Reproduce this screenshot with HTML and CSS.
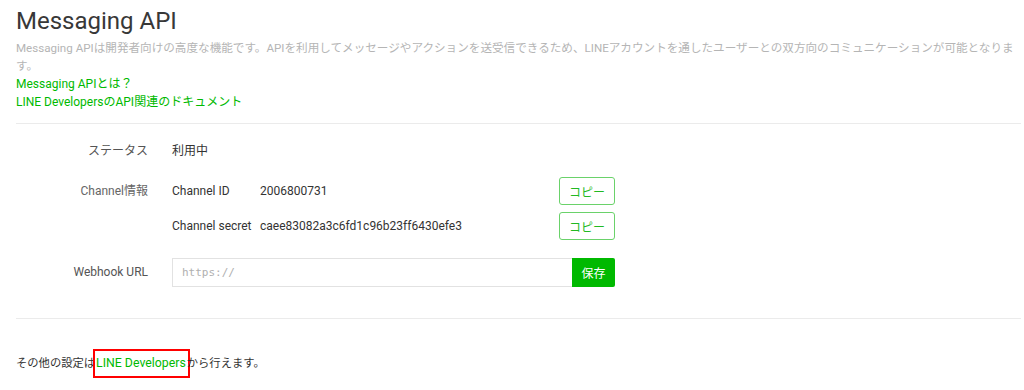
FILE: index.html
```html
<!DOCTYPE html>
<html lang="ja">
  <head>
    <meta charset="UTF-8" />
    <meta name="viewport" content="width=device-width, initial-scale=1.0" />
    <title>Messaging API</title>
    <link rel="stylesheet" href="styles.css">
  </head>
  <body>
    <div class="page">
      <h1 class="title">Messaging API</h1>
      <p class="desc">Messaging APIは開発者向けの高度な機能です。APIを利用してメッセージやアクションを送受信できるため、LINEアカウントを通したユーザーとの双方向のコミュニケーションが可能となります。</p>
      <div class="links">
        <a href="#">Messaging APIとは？</a>
        <a href="#">LINE DevelopersのAPI関連のドキュメント</a>
      </div>
      <hr />

      <div class="form">
        <div class="row status">
          <div class="label">ステータス</div>
          <div class="value">利用中</div>
        </div>

        <div class="row">
          <div class="label channel-label">Channel情報</div>
          <div class="value">
            <div class="info">
              <div class="info-key">Channel ID</div>
              <div class="info-val">2006800731</div>
              <button class="copy">コピー</button>
            </div>
            <div class="info">
              <div class="info-key">Channel secret</div>
              <div class="info-val">caee83082a3c6fd1c96b23ff6430efe3</div>
              <button class="copy">コピー</button>
            </div>
          </div>
        </div>

        <div class="row webhook">
          <div class="label">Webhook URL</div>
          <div class="value">
            <div class="url-box">
              <input type="text" placeholder="https://" />
              <button class="save">保存</button>
            </div>
          </div>
        </div>
      </div>
      <hr class="bottom-line" />

      <p class="note">その他の設定は<a href="#" class="mark">LINE Developers</a>から行えます。</p>
    </div>
  </body>
</html>
```

FILE: styles.css
```css
body {
    margin: 0;
    background: #fff;
    font-family: "Roboto", "Noto Sans CJK JP", sans-serif;
    color: #333;
}
.page {
    padding: 7px 3px 0 16px;
}
.title {
    margin: 0;
    font-size: 24px;
    font-weight: 400;
    line-height: 29px;
    color: #383838;
}
.desc {
    margin: 3px 0 0;
    font-size: 11.6px;
    line-height: 18px;
    color: #b5b5b5;
}
.links {
    display: flex;
    flex-direction: column;
    align-items: flex-start;
}
.links a {
    font-size: 12px;
    line-height: 18px;
    color: #00b900;
    text-decoration: none;
}
hr {
    margin: 12px 0 0;
    border: none;
    border-top: 1px solid #ebebeb;
}
.form {
    width: 599px;
    padding-top: 13px;
}
.row {
    display: flex;
    gap: 24px;
}
.label {
    width: 132px;
    flex-shrink: 0;
    text-align: right;
    font-size: 12px;
    color: #555;
    line-height: 28px;
}
.channel-label {
    color: #666;
}
.value {
    flex: 1;
    font-size: 12px;
    line-height: 28px;
    color: #333;
}
.status {
    margin-bottom: 12px;
}
.info {
    display: flex;
    align-items: center;
    margin-bottom: 7px;
}
.info-key {
    width: 88px;
}
.info-val {
    flex: 1;
}
.copy {
    width: 56px;
    height: 28px;
    padding: 0;
    background: #fff;
    border: 1px solid #6ad26a;
    border-radius: 3px;
    color: #22b922;
    font-family: "Noto Sans CJK JP", sans-serif;
    font-size: 12px;
}
.webhook {
    margin-top: 11px;
}
.url-box {
    display: flex;
    height: 29px;
}
.url-box input {
    width: 400px;
    box-sizing: border-box;
    height: 29px;
    margin: 0;
    padding: 0 9px;
    border: 1px solid #e2e2e2;
    border-right: none;
    font-family: "DejaVu Sans Mono", monospace;
    font-size: 11px;
    color: #333;
    outline: none;
}
.url-box input::placeholder {
    color: #b0b0b0;
}
.save {
    width: 43px;
    height: 29px;
    padding: 0;
    border: none;
    border-radius: 0 2px 2px 0;
    background: #00b900;
    color: #fff;
    font-family: "Noto Sans CJK JP", sans-serif;
    font-size: 12px;
}
.bottom-line {
    margin-top: 31px;
}
.note {
    margin: 30px 0 0;
    font-size: 11.3px;
    line-height: 29px;
    color: #333;
}
.mark {
    display: inline-block;
    vertical-align: top;
    margin-left: -2px;
    margin-right: -3px;
    padding: 0 2px 0 1px;
    line-height: 25px;
    font-size: 12.3px;
    color: #00b900;
    text-decoration: none;
    border: 2px solid #f00;
}
```
